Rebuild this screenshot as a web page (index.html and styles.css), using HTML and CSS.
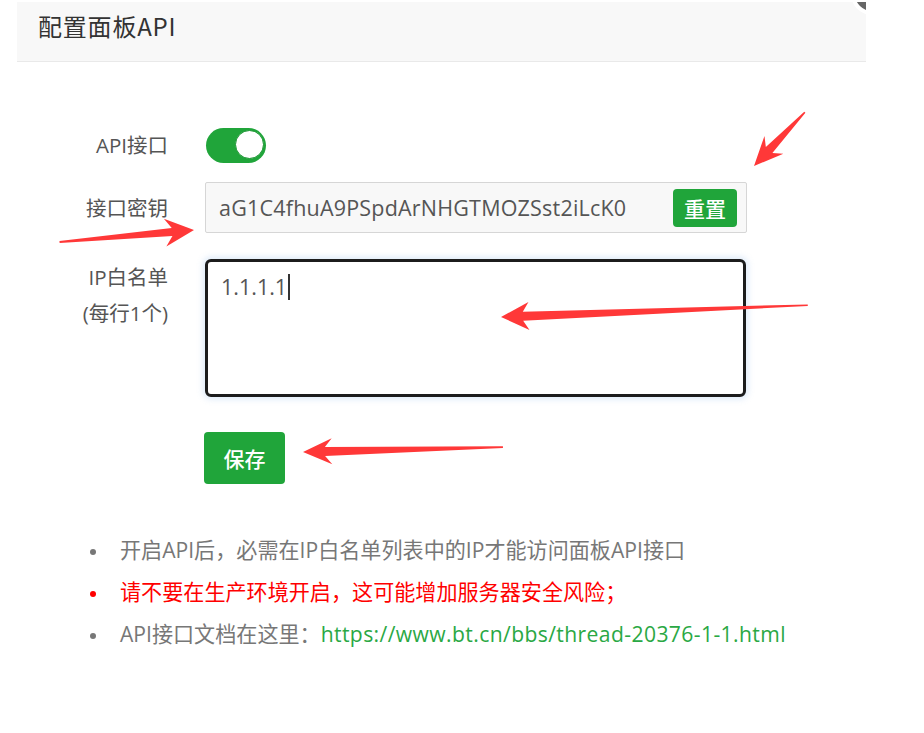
FILE: index.html
```html
<!DOCTYPE html>
<html lang="zh-CN">
<head>
    <meta charset="UTF-8">
    <meta name="viewport" content="width=device-width, initial-scale=1.0">
    <title>配置面板API</title>
    <link rel="stylesheet" href="styles.css">
</head>
<body>
    <div class="layer">
        <div class="layer-title">
            配置面板API
            <span class="layer-close"></span>
        </div>
        <div class="layer-content">
            <div class="line line-switch">
                <span class="tname">API接口</span>
                <div class="info">
                    <span class="switch on"><span class="knob"></span></span>
                </div>
            </div>
            <div class="line line-key">
                <span class="tname">接口密钥</span>
                <div class="info">
                    <div class="key-box">
                        <span class="key-text">aG1C4fhuA9PSpdArNHGTMOZSst2iLcK0</span>
                        <button class="btn btn-reset">重置</button>
                    </div>
                </div>
            </div>
            <div class="line line-ip">
                <span class="tname">IP白名单<br>(每行1个)</span>
                <div class="info">
                    <div class="ip-box">1.1.1.1<span class="caret"></span></div>
                </div>
            </div>
            <div class="line line-save">
                <span class="tname"></span>
                <div class="info">
                    <button class="btn btn-save">保存</button>
                </div>
            </div>
            <ul class="help">
                <li>开启API后，必需在IP白名单列表中的IP才能访问面板API接口</li>
                <li class="warn">请不要在生产环境开启，这可能增加服务器安全风险；</li>
                <li>API接口文档在这里：<a class="link" href="#">https://www.bt.cn/bbs/thread-20376-1-1.html</a></li>
            </ul>
        </div>
    </div>

    <!-- 标注箭头 -->
    <svg class="marks" width="924" height="733" viewBox="0 0 924 733">
        <g fill="#ff3838">
            <polygon transform="translate(754,166) rotate(133.4)" points="0,0 -29,-13 -22,-4.5 -74,-0.8 -74,0.8 -22,4.5 -29,13"/>
            <polygon transform="translate(194,230) rotate(-5.1)" points="0,0 -29,-14 -22,-4 -135,-1 -135,1 -22,4 -29,14"/>
            <polygon transform="translate(501,317) rotate(177.8)" points="0,0 -28,-14 -22,-4.5 -307,-0.8 -307,0.8 -22,4.5 -28,14"/>
            <polygon transform="translate(303,452) rotate(178.6)" points="0,0 -29,-13 -22,-4.5 -200,-0.8 -200,0.8 -22,4.5 -29,13"/>
        </g>
    </svg>
</body>
</html>
```

FILE: styles.css
```css
body {
    margin: 0;
    position: relative;
    background: #ffffff;
    font-family: "Open Sans", "Noto Sans CJK SC", sans-serif;
    color: #555555;
}
.layer {
    position: relative;
    margin: 2px 0 0 17px;
    width: 849px;
    min-height: 731px;
    overflow: hidden;
    background: #ffffff;
}
.layer-title {
    height: 53px;
    padding: 6px 0 0 21px;
    background: #f8f8f8;
    border-bottom: 1px solid #e9e9e9;
    font-family: "Noto Sans CJK SC", sans-serif;
    font-size: 24px;
    line-height: 35px;
    letter-spacing: 0.8px;
    color: #333333;
}
.layer-close {
    position: absolute;
    top: -29px;
    right: -27px;
    width: 34px;
    height: 34px;
    border: 4px solid #ffffff;
    border-radius: 50%;
    background: #666666;
}
.layer-content {
    padding-top: 65px;
}
.line {
    display: flex;
    align-items: center;
}
.tname {
    width: 151px;
    flex-shrink: 0;
    text-align: right;
    font-size: 20.5px;
    line-height: 36px;
    color: #555555;
}
.info {
    margin-left: 37px;
}
.line-key {
    margin-top: 19px;
}
.line-ip {
    margin-top: 26px;
    align-items: flex-start;
}
.line-save {
    margin-top: 35px;
}

/* 开关 */
.switch {
    display: block;
    position: relative;
    width: 60px;
    height: 35px;
    margin-left: 1px;
    border-radius: 18px;
    background: #20a53a;
}
.switch .knob {
    position: absolute;
    top: 2px;
    right: 2px;
    width: 29px;
    height: 29px;
    border: 1px solid #1b9532;
    box-sizing: border-box;
    border-radius: 50%;
    background: #ffffff;
}

/* 密钥框 */
.key-box {
    display: flex;
    align-items: center;
    justify-content: space-between;
    width: 542px;
    height: 51px;
    box-sizing: border-box;
    padding: 0 9px 0 13px;
    border: 1px solid #d6d6d6;
    border-radius: 2px;
    background: #f8f8f8;
}
.key-text {
    font-size: 21.5px;
    letter-spacing: 0.2px;
    color: #555555;
}
.btn {
    border: none;
    border-radius: 4px;
    background: #20a53a;
    color: #ffffff;
    font-family: "Noto Sans CJK SC", sans-serif;
    font-weight: 500;
    cursor: pointer;
    padding: 0;
}
.btn-reset {
    width: 64px;
    height: 38px;
    font-size: 21px;
}
.btn-save {
    width: 81px;
    height: 52px;
    margin-left: -1px;
    font-size: 21px;
}

/* IP白名单 */
.ip-box {
    width: 541px;
    height: 138px;
    box-sizing: border-box;
    padding: 10px 13px;
    border: 3px solid #1c1c1c;
    border-radius: 6px;
    box-shadow: 0 0 6px 2px rgba(120, 170, 230, 0.25);
    background: #ffffff;
    font-size: 21.5px;
    line-height: 30px;
    color: #555555;
}
.caret {
    display: inline-block;
    width: 0;
    height: 26px;
    margin-left: 1px;
    border-left: 2px solid #333333;
    vertical-align: -5px;
}

/* 说明 */
.help {
    list-style: none;
    margin: 45px 0 0 73px;
    padding: 0;
    font-size: 21.1px;
    line-height: 42px;
    color: #777777;
}
.help li::before {
    content: "";
    display: inline-block;
    width: 6px;
    height: 6px;
    margin-right: 24px;
    border-radius: 50%;
    background: #777777;
    vertical-align: middle;
}
.help .warn {
    color: #ff0000;
}
.help .warn::before {
    background: #ff0000;
}
.link {
    color: #2aa844;
    letter-spacing: 0.4px;
    text-decoration: none;
}

.marks {
    position: absolute;
    top: 0;
    left: 0;
    pointer-events: none;
}
```
